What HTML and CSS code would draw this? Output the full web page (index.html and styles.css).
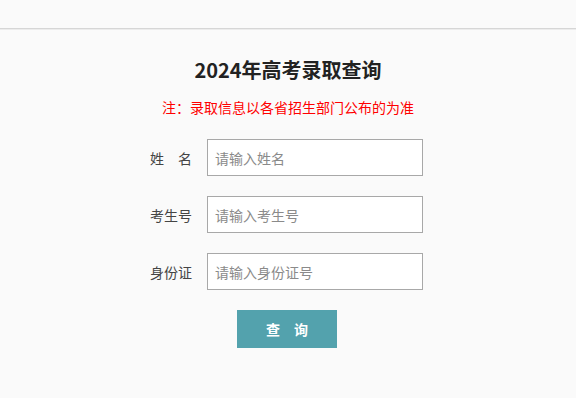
FILE: index.html
```html
<!DOCTYPE html>
<html lang="zh-CN">
<head>
<meta charset="utf-8">
<title>2024年高考录取查询</title>
<link rel="stylesheet" href="styles.css">
</head>
<body>
<div class="page">
  <div class="topbar"></div>
  <div class="main">
    <h1 class="title">2024年高考录取查询</h1>
    <p class="note">注：录取信息以各省招生部门公布的为准</p>
    <form class="form">
      <div class="row">
        <label class="label">姓　名</label>
        <input class="field" type="text" placeholder="请输入姓名">
      </div>
      <div class="row">
        <label class="label">考生号</label>
        <input class="field" type="text" placeholder="请输入考生号">
      </div>
      <div class="row">
        <label class="label">身份证</label>
        <input class="field" type="text" placeholder="请输入身份证号">
      </div>
      <button class="btn" type="button">查　询</button>
    </form>
  </div>
</div>
</body>
</html>
```
FILE: styles.css
```css
html, body {
  margin: 0;
  padding: 0;
  background: #ffffff;
}
body {
  font-family: "Noto Sans CJK SC", "Noto Sans", sans-serif;
}
.page {
  background: #fafafa;
  height: 398px;
}
.topbar {
  height: 28px;
  border-bottom: 1px solid #d6d6d6;
  box-shadow: 0 1px 0 #ececec;
}
.main {
  display: flex;
  flex-direction: column;
  align-items: center;
}
.title {
  margin: 27px 0 0;
  font-size: 20px;
  line-height: 28px;
  font-weight: bold;
  color: #222222;
}
.note {
  margin: 13px 0 0;
  font-size: 14px;
  line-height: 20px;
  color: #ff0000;
}
.form {
  margin-top: 22px;
  display: flex;
  flex-direction: column;
  align-items: center;
  gap: 20px;
}
.row {
  display: flex;
  align-items: center;
  gap: 14px;
  padding-right: 3px;
}
.label {
  width: 43px;
  font-size: 14px;
  color: #444444;
  white-space: nowrap;
}
.field {
  box-sizing: border-box;
  width: 216px;
  height: 37px;
  margin: 0;
  padding: 0 7px;
  border: 1px solid #a8a8a8;
  border-radius: 0;
  background: #ffffff;
  font-family: "Noto Sans CJK SC", "Noto Sans", sans-serif;
  font-size: 14px;
  color: #333333;
  outline: none;
}
.field::placeholder {
  color: #8a8a8a;
}
.btn {
  width: 100px;
  height: 38px;
  margin: 0 2px 0 0;
  padding: 0;
  border: none;
  background: #53a2ad;
  color: #ffffff;
  font-family: "Noto Sans CJK SC", "Noto Sans", sans-serif;
  font-size: 14px;
  font-weight: bold;
  cursor: pointer;
}
```
